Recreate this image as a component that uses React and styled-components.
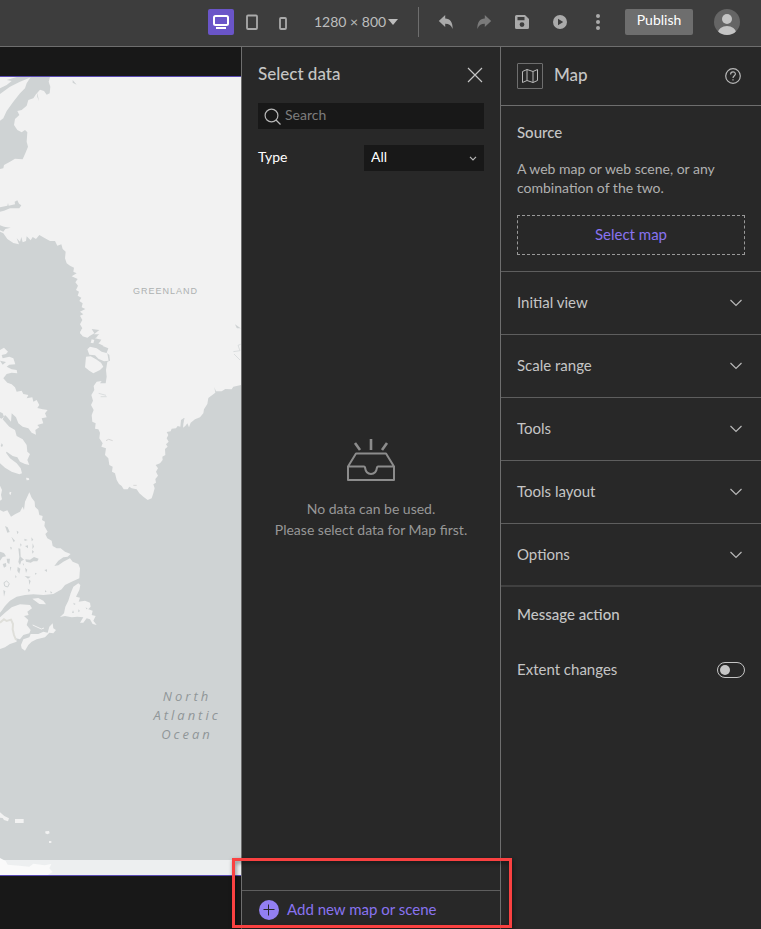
import React, { useState } from 'react'
import styled, { createGlobalStyle } from 'styled-components'

const GlobalStyle = createGlobalStyle`
  * {
    box-sizing: border-box;
  }
  body {
    margin: 0;
    background: #181818;
    color: #c5c5c5;
    font-family: Lato, "Liberation Sans", sans-serif;
    font-size: 14px;
    line-height: 20px;
  }
  button, input, select {
    font: inherit;
    color: inherit;
    margin: 0;
  }
  svg {
    display: block;
    flex: none;
  }
`

const Page = styled.div`
  display: flex;
  flex-direction: column;
  min-height: 100vh;
`

/* toolbar */

const Toolbar = styled.header`
  display: flex;
  justify-content: flex-end;
  align-items: center;
  height: 47px;
  padding: 0 21px 3px 0;
  background: #3d3d3d;
  border-bottom: 1px solid #6e6e6e;
`

const DeviceGroup = styled.div`
  display: flex;
  gap: 5px;
  margin-right: 18px;
`

const ActionGroup = styled.div`
  display: flex;
  gap: 12px;
  margin: 0 14px;
`

const IconButton = styled.button`
  display: flex;
  align-items: center;
  justify-content: center;
  width: 26px;
  height: 26px;
  padding: 0;
  border: 0;
  border-radius: 2px;
  cursor: pointer;
  color: ${props => props.$dim ? '#7a7a7a' : '#aaaaaa'};
  ${props => props.$active && `
    background: #6a55c8;
    color: #ffffff;
  `}
  ${props => !props.$active && 'background: none;'}
`

const SizePicker = styled.div`
  display: flex;
  align-items: center;
  width: 84px;
  margin-right: 20px;
  color: #bdbdbd;
`

const SizeSelect = styled.select`
  appearance: none;
  width: 74px;
  padding: 0;
  border: 0;
  background: none;
  line-height: 20px;
`

const Divider = styled.span`
  width: 1px;
  height: 30px;
  background: #6e6e6e;
`

const PublishButton = styled.button`
  width: 68px;
  height: 26px;
  padding: 0 0 3px;
  margin-right: 21px;
  border: 0;
  border-radius: 2px;
  background: #6e6e6e;
  color: #ffffff;
  cursor: pointer;
`

/* canvas */

const Body = styled.div`
  display: flex;
  flex: 1;
`

const Canvas = styled.main`
  display: flex;
  flex: 1;
  min-width: 0;
  padding: 29px 0 53px;
  background: #181818;
`

const MapFrame = styled.div`
  position: relative;
  flex: 1;
  overflow: hidden;
  background: #cfd3d4;
  border: solid #5a4bb4;
  border-width: 1px 0;
`

const MapDrawing = styled.svg`
  position: absolute;
  inset: 0;
  width: 100%;
  height: 100%;
`

const CountryLabel = styled.span`
  position: absolute;
  top: 26%;
  right: 43px;
  color: #adb1b1;
  font: 9px/14px "Liberation Sans", sans-serif;
  letter-spacing: 1px;
`

const OceanLabel = styled.span`
  position: absolute;
  top: 76%;
  right: 16px;
  width: 76px;
  padding-top: 4px;
  color: #909698;
  font: italic 13px/19px "Open Sans", "Noto Sans", sans-serif;
  letter-spacing: 3px;
  text-align: center;
`

/* panels */

const Panel = styled.aside`
  display: flex;
  flex-direction: column;
  flex: none;
  width: ${props => props.$width};
  background: #282828;
  border-left: 1px solid #6e6e6e;
`

const DataHeader = styled.div`
  display: flex;
  align-items: center;
  justify-content: space-between;
  height: 56px;
  padding: 0 12px 0 16px;
`

const Title = styled.h2`
  margin: 0;
  padding-bottom: 2px;
  font-size: 17px;
  font-weight: 500;
  line-height: 20px;
`

const SearchBox = styled.label`
  display: flex;
  align-items: center;
  gap: 4px;
  height: 26px;
  margin: 0 16px;
  padding: 0 6px;
  background: #181818;
`

const SearchInput = styled.input`
  flex: 1;
  min-width: 0;
  padding: 0 0 3px;
  border: 0;
  background: none;
  outline: none;
  &::placeholder {
    color: #7d7d7d;
    opacity: 1;
  }
`

const FilterRow = styled.div`
  display: flex;
  align-items: center;
  justify-content: space-between;
  margin: 16px 16px 0;
  color: #ffffff;
`

const FilterLabel = styled.label`
  padding-bottom: 2px;
`

const TypeBox = styled.div`
  display: flex;
  align-items: center;
  width: 120px;
  height: 26px;
  padding: 0 7px;
  background: #181818;
`

const TypeSelect = styled.select`
  appearance: none;
  flex: 1;
  min-width: 0;
  padding: 0 0 2px;
  border: 0;
  background: none;
`

const EmptyState = styled.div`
  display: flex;
  flex: 1;
  flex-direction: column;
  align-items: center;
  justify-content: center;
  gap: 17px;
  padding-bottom: 83px;
  color: #979797;
`

const EmptyText = styled.p`
  margin: 0;
  line-height: 21px;
  text-align: center;
`

const DataFooter = styled.div`
  position: relative;
  z-index: 1;
  display: flex;
  align-items: center;
  height: 39px;
  padding: 0 17px;
  border-top: 1px solid #5e5e5e;
`

const AddButton = styled.button`
  display: flex;
  align-items: center;
  gap: 8px;
  padding: 0;
  border: 0;
  background: none;
  color: #8873f0;
  font-size: 15px;
  cursor: pointer;
`

const AddLabel = styled.span`
  padding-bottom: 2px;
`

const Highlight = styled.span`
  position: absolute;
  top: -33px;
  right: -12px;
  bottom: 1px;
  left: -10px;
  border: 3px solid #fa4141;
  filter: drop-shadow(1px 2px 2px rgba(0, 0, 0, 0.5));
  pointer-events: none;
`

const SettingsHeader = styled.div`
  display: flex;
  align-items: center;
  gap: 11px;
  height: 59px;
  padding: 0 16px;
  border-bottom: 1px solid #6e6e6e;
`

const WidgetIcon = styled.span`
  display: flex;
  align-items: center;
  justify-content: center;
  width: 26px;
  height: 26px;
  border: 1px solid #6e6e6e;
  border-radius: 1px;
`

const HelpLink = styled.a`
  margin-left: auto;
  padding: 4px;
  color: #b8b8b8;
`

const Section = styled.section`
  padding: 16px;
  border-bottom: 1px solid #5e5e5e;
`

const SectionTitle = styled.h3`
  margin: 0;
  font-size: 15px;
  font-weight: 500;
  line-height: 20px;
`

const Description = styled.p`
  margin: 17px 0;
  padding-bottom: 1px;
  color: #b0b0b0;
  line-height: 19px;
`

const SelectMapButton = styled.button`
  width: 100%;
  height: 40px;
  padding: 0 0 3px;
  border: 1px dashed #999999;
  background: none;
  color: #8873f0;
  font-size: 15px;
  cursor: pointer;
`

const AccordionRow = styled.button`
  display: flex;
  align-items: center;
  justify-content: space-between;
  height: 63px;
  padding: 0 19px 0 16px;
  border: 0;
  border-bottom: 1px solid #5e5e5e;
  background: none;
  font-size: 15px;
  text-align: left;
  cursor: pointer;
  &:last-of-type {
    border-bottom: 2px solid #404040;
  }
`

const RowLabel = styled.span`
  padding-bottom: 2px;
`

const MessageSection = styled.section`
  display: flex;
  flex-direction: column;
  gap: 35px;
  padding: 17px 16px;
`

const SwitchRow = styled.label`
  display: flex;
  align-items: center;
  justify-content: space-between;
  font-size: 15px;
`

const Switch = styled.input`
  display: flex;
  align-items: center;
  appearance: none;
  width: 28px;
  height: 16px;
  padding: 0 2px;
  border: 1px solid #c5c5c5;
  border-radius: 8px;
  cursor: pointer;
  &::before {
    content: "";
    width: 10px;
    height: 10px;
    border-radius: 50%;
    background: #c5c5c5;
  }
  &:checked {
    justify-content: flex-end;
    background: #6a55c8;
  }
`

const DesktopIcon = () => (
  <svg width="16" height="14" viewBox="0 0 16 14" fill="none" stroke="currentColor" strokeWidth="2">
    <rect x="1" y="1" width="14" height="9" rx="1.5" />
    <path d="M3 13h10" />
  </svg>
)

const TabletIcon = () => (
  <svg width="12" height="16" viewBox="0 0 12 16" fill="none" stroke="currentColor" strokeWidth="1.8">
    <rect x="1" y="1.5" width="10" height="13.5" rx="1" />
  </svg>
)

const PhoneIcon = () => (
  <svg width="8" height="16" viewBox="0 0 8 16" fill="none" stroke="currentColor" strokeWidth="1.8">
    <rect x="1" y="4" width="6" height="11" rx="1" />
  </svg>
)

const UndoIcon = ({ flip }) => (
  <svg width="16" height="16" viewBox="0 0 16 16" fill="currentColor">
    <path transform={flip ? 'translate(16 0) scale(-1 1)' : undefined} d="M.8 7 7.2 1v3.500c5 .2 7.600 3.600 7.400 10.500-1.200-3.600-3.400-5.200-7.400-5.300V13z" />
  </svg>
)

const SaveIcon = () => (
  <svg width="16" height="16" viewBox="0 0 16 16" fill="currentColor">
    <path fillRule="evenodd" d="M2.5 1H11l4 4v8.500a1.500 1.500 0 0 1-1.500 1.500h-11A1.500 1.500 0 0 1 1 13.500v-11A1.500 1.500 0 0 1 2.500 1ZM3.500 3v3.200h7V3ZM8 8.200a2.400 2.400 0 1 0 0 4.800 2.400 2.400 0 0 0 0-4.800Z" />
  </svg>
)

const PlayIcon = () => (
  <svg width="16" height="16" viewBox="0 0 16 16" fill="currentColor">
    <path fillRule="evenodd" d="M8 1a7 7 0 1 0 0 14A7 7 0 0 0 8 1ZM6 4.800 11.200 8 6 11.200Z" />
  </svg>
)

const MoreIcon = () => (
  <svg width="6" height="16" viewBox="0 0 6 16" fill="currentColor">
    <circle cx="3" cy="2" r="2" />
    <circle cx="3" cy="8" r="2" />
    <circle cx="3" cy="14" r="2" />
  </svg>
)

const Avatar = () => (
  <svg width="26" height="26" viewBox="0 0 26 26" role="img" aria-label="Account">
    <clipPath id="avatarClip"><circle cx="13" cy="13" r="13" /></clipPath>
    <g clipPath="url(#avatarClip)">
      <rect width="26" height="26" fill="#656565" />
      <circle cx="13" cy="10" r="5" fill="#c4c4c4" />
      <ellipse cx="13" cy="23.500" rx="9" ry="6.500" fill="#c4c4c4" />
    </g>
  </svg>
)

const CloseIcon = () => (
  <svg width="16" height="16" viewBox="0 0 16 16" stroke="#c5c5c5" strokeWidth="1.2">
    <path d="m1 1 14 14M15 1 1 15" />
  </svg>
)

const SearchIcon = () => (
  <svg width="17" height="17" viewBox="0 0 17 17" fill="none" stroke="#b8b8b8" strokeWidth="1.2">
    <circle cx="7.5" cy="7.5" r="6.4" />
    <path d="m12 12 4.500 4.500" />
  </svg>
)

const Chevron = ({ small }) => (
  <svg width={small ? 8 : 12} height={small ? 5 : 8} viewBox={small ? '0 0 8 5' : '0 0 12 8'} fill="none" stroke="#b8b8b8" strokeWidth="1.2">
    <path d={small ? 'm1 .8 3 3 3-3' : 'm.5 1 5.500 5.500L11.500 1'} />
  </svg>
)

const MapIcon = () => (
  <svg width="16" height="16" viewBox="0 0 16 16" fill="none" stroke="#b8b8b8">
    <path d="M.5 3.500 5 1.500l6 2 4.500-2v11l-4.500 2-6-2-4.500 2ZM5 1.500v11M11 3.500v11" strokeLinejoin="round" />
  </svg>
)

const HelpIcon = () => (
  <svg width="16" height="16" viewBox="0 0 16 16" fill="none" stroke="currentColor" strokeWidth="1.2">
    <circle cx="8" cy="8" r="7.3" />
    <path d="M5.600 6.400c0-3.400 4.800-3.300 4.800-.4C10.400 7.700 8 7.700 8 10" />
    <path d="M8 11.200v1.300" />
  </svg>
)

const InboxIcon = () => (
  <svg width="48" height="42" viewBox="0 0 48 42" fill="none" stroke="#8c8c8c" strokeWidth="2" strokeLinejoin="round">
    <path d="M9 14.500h30l8 13V41H1V27.500ZM1 27.500h16c.6 0 .9.400 1 1 1.200 8.500 10.800 8.500 12 0 .1-.6.400-1 1-1h16" />
    <path d="M24 0v11M8 4l5 7M40 4l-5 7" strokeWidth="2.6" />
  </svg>
)

const PlusIcon = () => (
  <svg width="20" height="20" viewBox="0 0 20 20">
    <circle cx="10" cy="10" r="10" fill="#927ff2" />
    <path d="M4.500 9.500h11M9.500 4.500v11" stroke="#282828" />
  </svg>
)

const BaseMap = () => (
  <MapDrawing viewBox="0 0 723 2394" preserveAspectRatio="xMaxYMid slice" aria-hidden="true">
    {/* northern greenland and ellesmere */}
    <g transform="translate(0 -96)">
      <path fill="#f2f2f2" d="M0 96H723V902H310L295 895 308 885 285 880 305 868 282 868 298 855 275 852 283 865 270 872 262 878 248 874 240 862 247 850 240 838 247 825 240 812 250 808 240 800 256 792 245 787 248 775 238 768 244 758 233 752 237 740 228 735 234 722 226 712 233 702 215 694 230 685 220 680 222 668 210 662 200 655 195 640 197 620 188 612 184 598 172 602 165 588 150 588 135 580 118 570 108 582 98 576 92 586 80 574 78 588 68 592 64 576 60 590 50 580 57 598 40 594 22 582 10 565 0 560Z" />
      <g fill="#cfd3d4">
        <path d="M92 96H150L146 110 151 125 149 145 140 149 132 138 120 134 108 148 100 160 85 165 80 182 65 195 52 198 58 210 45 222 42 240 52 255 65 262 75 255 82 262 80 290 84 305 76 325 68 343 45 341 30 350 12 360 10 370 0 372V227L10 220 20 198 40 170 60 145 75 130 80 115Z" />
        <path d="M0 130 20 120 35 108 20 105 50 96H95L60 110 30 125 0 147Z" />
        <path d="M0 487 22 482 24 474 26 482 45 478 44 470 52 466 57 476 64 481 58 490 30 490 12 497 0 500ZM0 541 12 545 32 548 16 552 10 560 0 556ZM110 140l4 14 3 14-5-12ZM218 105l12 14-12-6ZM705 838l17 12v20l-6-8Z" />
      </g>
    </g>

    <g transform="translate(0 759)">
      {/* southern greenland */}
      <path fill="#f2f2f2" d="M308 -5H723V165L700 170 695 178 676 177 665 184 648 184 643 172 646 188 636 196 625 204 622 222 612 238 610 250 600 262 585 268 572 278 567 292 562 280 556 288 549 293 552 264 543 270 541 290 533 288 528 295 515 296 512 304 500 306 505 315 500 325 506 335 498 343 503 350 495 357 496 375 487 380 488 390 480 400 467 405 474 415 468 425 474 437 466 447 468 458 460 463 464 475 460 490 455 505 443 510 430 500 418 490 410 478 395 475 388 470 383 478 371 478 365 468 357 462 350 450 345 430 336 425 338 410 328 405 325 385 315 375 318 355 304 350 308 340 298 325 300 308 295 298 285 296 287 280 277 275 275 255 281 240 273 225 279 212 274 195 283 180 281 168 290 155 305 153 300 160 317 160 320 140 318 120 322 95 330 92 328 75 320 68 325 55 308 48 318 40 300 35 308 22 290 20 300 10Z" />
      <path fill="#f2f2f2" d="M240 10 245 -2H275L272 15 262 22 250 18ZM275 28l8 2-3 10-8-2ZM262 58 270 50 290 55 305 65 322 70 326 92 312 94 295 86 285 76 268 74ZM258 80 272 79 288 88 303 98 310 110 300 120 280 130 268 122 255 112Z" />
      <path fill="none" stroke="#cfd3d4" strokeWidth="2" d="M296 190l22 6M302 200h18M700 65l20-3-6-16 8-3M702 72l18 18M553 264l-8 24" />
      <path fill="none" stroke="#d8d8d8" strokeWidth="3" d="M318 332l8-4 12 4M400 466h10" />

      {/* baffin island */}
      <path fill="#f2f2f2" d="M0 60 12 53 24 65 18 72 5 75 8 85 28 80 40 85 46 103 28 104 20 110 35 118 50 120 52 130 35 128 20 132 10 145 22 158 35 163 45 172 50 185 65 182 70 192 85 195 80 205 97 202 100 215 110 210 118 225 112 234 128 238 143 240 135 250 140 262 125 265 130 280 112 285 118 292 106 300 108 314 95 308 85 295 68 290 55 280 48 262 35 250 33 275 22 262 15 255 8 268 28 290 45 300 50 318 68 328 80 345 82 365 90 372 82 390 88 405 75 402 60 395 52 382 38 378 20 365 18 368 30 385 50 400 62 415 66 430 58 433 35 425 15 413 0 400ZM78 443l8 1 2 6-8 1ZM29 485l5 2-2 8-4-3ZM0 467 6 480 3 495 6 508 0 512Z" />
      <path fill="#cfd3d4" d="M0 246 8 250 12 260 5 266 0 264ZM5 340l4 5-3 6-4-3ZM0 92l18 4-10 8Z" />

      {/* labrador, quebec and newfoundland */}
      <path fill="#f2f2f2" d="M0 540 10 545 22 541 33 560 45 553 60 545 68 530 72 540 75 515 88 487 95 503 104 515 105 530 115 540 118 555 128 558 126 570 135 575 133 588 143 605 136 612 142 625 155 632 158 648 170 655 182 655 195 665 212 672 203 680 190 682 175 692 163 708 175 706 190 695 210 685 218 695 235 702 240 715 238 745 215 755 195 765 185 778 160 792 130 795 100 793 75 795 50 800 30 812 15 828 5 842 0 848Z" />
      <path fill="#f2f2f2" d="M0 862 15 848 35 832 60 823 90 825 96 835 82 845 86 855 72 858 85 870 80 885 92 900 88 910 70 915 60 928 48 925 50 935 30 942 15 952 0 957ZM97 806 115 804 130 812 138 823 118 822ZM63 945 70 928 88 922 92 912 115 912 130 905 143 908 148 890 158 880 160 895 168 900 160 910 148 908 135 922 110 928 95 935 85 945 75 962 65 955Z" />
      <path fill="#f2f2f2" d="M180 861 192 850 196 830 205 812 212 790 220 770 235 760 241 765 238 780 228 800 240 803 236 815 255 812 270 818 272 830 265 838 278 842 275 855 287 858 280 872 290 885 278 882 270 868 260 865 250 878 240 878 250 862 232 860 215 862 195 858Z" />
      <g fill="#cfd3d4">
        <path d="M0 665l12 4 6 10-10 2-8 11ZM76 688l14 1 12-8 14 5-4 8-12 0-8 4-14-3ZM55 655l6 1 1 24 10 9-8 4-4 12-5-9 3-15Z" />
        <path d="M15 588l8 4 6 14-7 2ZM34 620l11 12-4 5ZM50 602l6 4-4 7ZM73 626l10 4-9 3ZM94 622l6 7-5 5ZM75 648l9-2 0 9ZM98 640l4 10-5 7ZM96 660l6 5-5 6ZM8 702l10-3 1 10-7 4ZM20 686l10 0-2 16-6-4ZM53 711l8 5-3 15-6-8ZM75 713l7 6-4 10ZM74 738l18 2-8 6ZM86 748l6 5-4 12ZM10 780l6 4-4 16ZM133 720l8-2 0 8ZM105 728l6 3-6 3ZM83 776l8 4-5 7ZM135 780l5 5-5 2ZM150 784l7 3-4 4ZM30 710l4 2-3 12ZM45 735l5 5-3 5ZM60 640l5 4-3 6ZM30 650l6 3-3 7ZM68 700l4 2-2 5Z" />
        <path d="M220 818l7 4-5 3ZM235 838l5 5-5 4ZM216 849l3-8 3 7ZM257 832l6 4-4 2Z" />
      </g>
      <path fill="none" stroke="#cfd3d4" strokeWidth="3" d="M12 758l8-5 8 8-5 10-9-3Z" />
      <path fill="none" stroke="#dfdfda" strokeWidth="6" d="M0 878 12 868 20 873 33 869 39 882 38 898 42 915 48 930" />
      <path fill="none" stroke="#f2f2f2" strokeWidth="3" d="M98 885l13 6 13 6 8-3" />
    </g>

    {/* southern islands and the map edge */}
    <g transform="translate(0 1749)">
      <path d="M0 457l13 11 14 7-3 9-12-4-4-6-8-1ZM45 477h26v12H45ZM136 514l11-1 2 7-7 3-6-3ZM147 543h7v6h-7Z" fill="#f2f2f2" />
      <path d="M0 600h723v60H0Z" fill="#edeff0" />
      <path d="M0 594l17 9 6 11 35 3 30 3 12-9 34 5 20-4-6 13 10 11-14 8 13 8-10 8H0Z" fill="#fafafa" />
    </g>
  </MapDrawing>
)

const accordionRows = ['Initial view', 'Scale range', 'Tools', 'Tools layout', 'Options']

const TopBar = () => (
  <Toolbar>
    <DeviceGroup>
      <IconButton $active aria-label="Large screen"><DesktopIcon /></IconButton>
      <IconButton aria-label="Medium screen"><TabletIcon /></IconButton>
      <IconButton aria-label="Small screen"><PhoneIcon /></IconButton>
    </DeviceGroup>
    <SizePicker>
      <SizeSelect aria-label="Screen size">
        <option>1280 × 800</option>
      </SizeSelect>
      <svg width="10" height="6" viewBox="0 0 10 6" fill="currentColor"><path d="M0 0h10L5 6Z" /></svg>
    </SizePicker>
    <Divider />
    <ActionGroup>
      <IconButton aria-label="Undo"><UndoIcon /></IconButton>
      <IconButton $dim aria-label="Redo"><UndoIcon flip /></IconButton>
      <IconButton aria-label="Save"><SaveIcon /></IconButton>
      <IconButton aria-label="Preview"><PlayIcon /></IconButton>
      <IconButton aria-label="More"><MoreIcon /></IconButton>
    </ActionGroup>
    <PublishButton>Publish</PublishButton>
    <Avatar />
  </Toolbar>
)

const DataPanel = () => (
  <Panel $width="259px">
    <DataHeader>
      <Title>Select data</Title>
      <IconButton aria-label="Close"><CloseIcon /></IconButton>
    </DataHeader>
    <SearchBox>
      <SearchIcon />
      <SearchInput type="text" placeholder="Search" aria-label="Search" />
    </SearchBox>
    <FilterRow>
      <FilterLabel htmlFor="dataType">Type</FilterLabel>
      <TypeBox>
        <TypeSelect id="dataType">
          <option>All</option>
        </TypeSelect>
        <Chevron small />
      </TypeBox>
    </FilterRow>
    <EmptyState>
      <InboxIcon />
      <EmptyText>
        No data can be used.<br />
        Please select data for Map first.
      </EmptyText>
    </EmptyState>
    <DataFooter>
      <AddButton>
        <PlusIcon />
        <AddLabel>Add new map or scene</AddLabel>
      </AddButton>
      <Highlight />
    </DataFooter>
  </Panel>
)

const SettingsPanel = () => {
  const [extentChanges, setExtentChanges] = useState(false)
  return (
    <Panel $width="261px">
      <SettingsHeader>
        <WidgetIcon><MapIcon /></WidgetIcon>
        <Title>Map</Title>
        <HelpLink href="#help" aria-label="Help"><HelpIcon /></HelpLink>
      </SettingsHeader>
      <Section>
        <SectionTitle>Source</SectionTitle>
        <Description>A web map or web scene, or any combination of the two.</Description>
        <SelectMapButton>Select map</SelectMapButton>
      </Section>
      {accordionRows.map(name => (
        <AccordionRow key={name} aria-expanded="false">
          <RowLabel>{name}</RowLabel>
          <Chevron />
        </AccordionRow>
      ))}
      <MessageSection>
        <SectionTitle>Message action</SectionTitle>
        <SwitchRow>
          <RowLabel>Extent changes</RowLabel>
          <Switch
            type="checkbox"
            role="switch"
            checked={extentChanges}
            onChange={e => setExtentChanges(e.target.checked)}
          />
        </SwitchRow>
      </MessageSection>
    </Panel>
  )
}

export default function App() {
  return (
    <Page>
      <GlobalStyle />
      <TopBar />
      <Body>
        <Canvas>
          <MapFrame>
            <BaseMap />
            <CountryLabel>GREENLAND</CountryLabel>
            <OceanLabel>North Atlantic Ocean</OceanLabel>
          </MapFrame>
        </Canvas>
        <DataPanel />
        <SettingsPanel />
      </Body>
    </Page>
  )
}
